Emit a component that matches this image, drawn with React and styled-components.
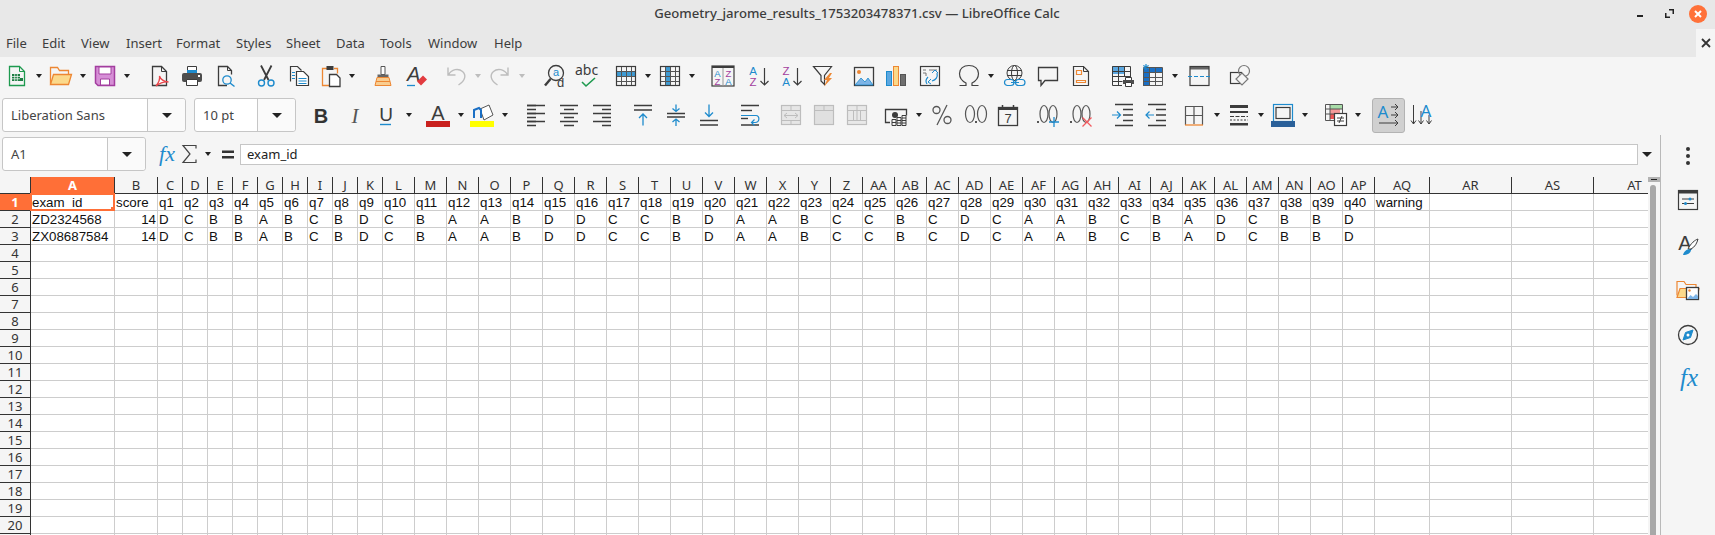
import styled, { createGlobalStyle } from 'styled-components';

const GlobalStyle = createGlobalStyle`
  html, body { margin: 0; padding: 0; background: #f5f5f5; overflow: hidden; }
  #root { width: 1715px; height: 535px; overflow: hidden; }
`;

const UI_FONT = '"Noto Sans", "Open Sans", sans-serif';
const DARK = '#3c3c3c';
const BLUE = '#1e8bcd';
const ORANGE = '#ed8733';
const PURPLE = '#a33e9f';
const GREEN = '#1e9a4f';
const RED = '#e8454a';
const GRAY = '#bdbdbd';

const Window = styled.div`
  width: 1715px;
  height: 535px;
  display: flex;
  flex-direction: column;
  background: #f5f5f5;
  color: #333;
  font-family: ${UI_FONT};
  overflow: hidden;
`;

const TitleBar = styled.div`
  height: 29px;
  flex: none;
  background: #e8e8e8;
  display: flex;
  align-items: center;
  justify-content: center;
  position: relative;
`;

const Title = styled.div`
  font-size: 13.15px;
  font-weight: 500;
  color: #3d3d3d;
  margin-top: -3px;
  margin-right: 1px;
`;

const WindowControls = styled.div`
  position: absolute;
  top: 0;
  right: 3px;
  height: 27px;
  display: flex;
  align-items: center;
`;

const CtrlButton = styled.div`
  width: 28px;
  height: 26px;
  display: flex;
  align-items: center;
  justify-content: center;
`;

const CloseCircle = styled.div`
  width: 18px;
  height: 18px;
  border-radius: 50%;
  background: #ff7139;
  display: flex;
  align-items: center;
  justify-content: center;
`;

const MenuBar = styled.div`
  height: 28px;
  flex: none;
  background: #e8e8e8;
  display: flex;
  align-items: center;
  padding-left: 6px;
  position: relative;
`;

const MenuItem = styled.div`
  width: ${({ $w }) => $w}px;
  flex: none;
  font-size: 13px;
  color: #3d3d3d;
  white-space: nowrap;
`;

const DocClose = styled.div`
  position: absolute;
  right: 0;
  top: 0;
  width: 19px;
  height: 28px;
  background: #f5f5f5;
  display: flex;
  align-items: center;
  justify-content: center;
`;

const ToolRow = styled.div`
  height: ${({ $h }) => $h}px;
  flex: none;
  display: flex;
  align-items: center;
  padding-left: ${({ $pl }) => $pl || 0}px;
`;

const Tool = styled.div`
  flex: none;
  width: ${({ $w }) => $w}px;
  height: ${({ $active }) => ($active ? '35px' : '24px')};
  margin-left: ${({ $ml }) => $ml}px;
  display: flex;
  align-items: center;
  justify-content: center;
  box-sizing: border-box;
  background: ${({ $active }) => ($active ? '#d0d0d0' : 'transparent')};
  border: ${({ $active }) => ($active ? '1px solid #b3b3b3' : 'none')};
  border-radius: 3px;
  svg { display: block; overflow: visible; flex: none; }
`;

const Caret = styled.span`
  display: block;
  width: 0;
  height: 0;
  border-left: ${({ $big }) => ($big ? 5 : 3.5)}px solid transparent;
  border-right: ${({ $big }) => ($big ? 5 : 3.5)}px solid transparent;
  border-top: ${({ $big }) => ($big ? 5 : 4)}px solid ${({ $gray }) => ($gray ? '#bdbdbd' : '#222')};
`;

const Combo = styled.div`
  width: ${({ $w }) => $w}px;
  height: 34px;
  margin-left: ${({ $ml }) => $ml || 0}px;
  flex: none;
  box-sizing: border-box;
  display: flex;
  background: #fff;
  border: 1px solid #c6c6c6;
  border-radius: 3px;
`;

const ComboText = styled.div`
  flex: 1;
  display: flex;
  align-items: center;
  padding-left: 8px;
  font-size: 13px;
  color: #444;
`;

const ComboArrow = styled.div`
  width: ${({ $w }) => $w}px;
  flex: none;
  display: flex;
  align-items: center;
  justify-content: center;
  background: #fafafa;
  border-left: 1px solid #c6c6c6;
  border-radius: 0 3px 3px 0;
`;

const Body = styled.div`
  flex: 1;
  min-height: 0;
  display: flex;
`;

const Workspace = styled.div`
  width: 1660px;
  flex: none;
  display: flex;
  flex-direction: column;
`;

const FormulaBar = styled.div`
  height: 38px;
  padding: 0 0 4px 2px;
  flex: none;
  display: flex;
  align-items: center;
`;

const FormulaInput = styled.div`
  width: 1398px;
  height: 21px;
  flex: none;
  box-sizing: border-box;
  background: #fff;
  border: 1px solid #c6c6c6;
  padding-left: 6px;
  font-size: 13px;
  line-height: 19px;
  color: #222;
`;

const SheetRow = styled.div`
  flex: 1;
  min-height: 0;
  display: flex;
`;

const SheetClip = styled.div`
  width: 1648px;
  flex: none;
  overflow: hidden;
  background: #fff;
`;

const SheetGrid = styled.div`
  display: grid;
  grid-template-columns: ${({ $cols }) => $cols};
  grid-auto-rows: 17px;
  width: max-content;
`;

const ColHead = styled.div`
  box-sizing: border-box;
  border-right: 1px solid #333;
  border-bottom: 1px solid #333;
  background: ${({ $on }) => ($on ? '#ff6f37' : '#f5f5f5')};
  color: ${({ $on }) => ($on ? '#fff' : '#333')};
  font-weight: ${({ $on }) => ($on ? 700 : 400)};
  font-size: 13px;
  line-height: 17px;
  text-align: center;
  overflow: hidden;
`;

const RowHead = styled.div`
  box-sizing: border-box;
  border-right: 1px solid #333;
  border-bottom: 1px solid #333;
  background: ${({ $on }) => ($on ? '#ff6f37' : '#f5f5f5')};
  color: ${({ $on }) => ($on ? '#fff' : '#333')};
  font-weight: ${({ $on }) => ($on ? 700 : 400)};
  font-size: 13px;
  line-height: 17px;
  text-align: center;
`;

const Cell = styled.div`
  position: relative;
  box-sizing: border-box;
  border-right: 1px solid #cdcdcd;
  border-bottom: 1px solid #cdcdcd;
  background: #fff;
  padding: 0 1px;
  font-family: "Liberation Sans", Arial, sans-serif;
  font-size: 13.33px;
  line-height: 17px;
  color: #111;
  white-space: nowrap;
  text-align: ${({ $right }) => ($right ? 'right' : 'left')};
`;

const CellCursor = styled.div`
  position: absolute;
  left: -1px;
  top: -1px;
  right: -1px;
  bottom: -1px;
  border: 2px solid #ff6f37;
  pointer-events: none;
  &::after {
    content: '';
    position: absolute;
    right: -3px;
    bottom: -3px;
    width: 5px;
    height: 5px;
    background: #ff6f37;
  }
`;

const ScrollTrack = styled.div`
  width: 12px;
  flex: none;
  display: flex;
  flex-direction: column;
  align-items: center;
  background: #f5f5f5;
`;

const ScrollCap = styled.div`
  width: 12px;
  height: 5px;
  flex: none;
  background: #b3b3b3;
  display: flex;
  align-items: center;
  justify-content: center;
  &::after {
    content: '';
    width: 6px;
    height: 1px;
    background: #222;
  }
`;

const ScrollThumb = styled.div`
  width: 6px;
  margin: 3px 3px 0 0;
  flex: 1;
  background: #a8a8a8;
  border-radius: 3px 3px 0 0;
`;

const Sidebar = styled.div`
  flex: 1;
  border-left: 1px solid #b9b9b9;
  display: flex;
  flex-direction: column;
  align-items: center;
  gap: 21px;
  padding-top: 11px;
`;

const SideIcon = styled.div`
  width: 24px;
  height: 24px;
  display: flex;
  align-items: center;
  justify-content: center;
  svg { display: block; overflow: visible; }
`;

const Dots = styled.div`
  height: 20px;
  margin-bottom: 1px;
  display: flex;
  flex-direction: column;
  align-items: center;
  justify-content: center;
  gap: 3px;
  span {
    width: 4px;
    height: 4px;
    border-radius: 50%;
    background: #333;
  }
`;

const T = ({ x, y, s = 12, c = DARK, w, i, f = 'Liberation Sans', a, children, ls }) => (
  <text x={x} y={y} fontSize={s} fill={c} stroke="none" fontWeight={w} fontStyle={i ? 'italic' : undefined}
    fontFamily={`"${f}", sans-serif`} textAnchor={a} letterSpacing={ls}>{children}</text>
);

const Lines = ({ ys, x1 = 3, x2 = 21, c = DARK, sw = 1.4 }) => (
  <path d={ys.map((y) => `M${x1} ${y}H${x2}`).join('')} stroke={c} strokeWidth={sw} />
);

const GridLines = ({ c = DARK }) => (
  <path d="M3 7.5h18M3 12.5h18M3 17.5h18M7.5 3v18M12.5 3v18M17.5 3v18" stroke={c} strokeWidth="1" />
);

const Zeros = ({ x, c = '#555' }) => (
  <>
    <rect x={x} y="18" width="2" height="2" fill={c} />
    <ellipse cx={x + 7} cy="11" rx="4" ry="8.500" stroke={c} strokeWidth="1.200" />
    <ellipse cx={x + 16} cy="11" rx="4" ry="8.500" stroke={c} strokeWidth="1.200" />
  </>
);

const icons = {
  calc: (
    <>
      <path d="M4.5 2.5h10l5 5v14h-15z" stroke={GREEN} strokeWidth="1.3" />
      <path d="M14.5 2.5v5h5" stroke={GREEN} />
      <path d="M7 10h8v7H7zM15 14h3v3h-3z" fill="#1c7c42" />
      <path d="M7 12.5h8M7 14.8h8M9.7 10v7M12.3 10v7" stroke="#fff" strokeWidth=".7" />
    </>
  ),
  open: (
    <>
      <path d="M1.5 20V3.5h7l2 3h9v4" stroke={ORANGE} strokeWidth="1.3" />
      <path d="M1.5 20.5l3-10h18l-3 10z" fill="#fbd98b" stroke={ORANGE} strokeWidth="1.3" />
    </>
  ),
  save: (
    <>
      <path d="M2.5 2.5h19v19H5l-2.5-2.5z" fill="#d68fd6" stroke={PURPLE} strokeWidth="1.5" />
      <path d="M6 3h12v7H6zM7.5 15h9v6h-9z" fill="#fff" stroke={PURPLE} />
    </>
  ),
  pdf: (
    <>
      <path d="M5.5 2.5h9l5 5v14h-14z" stroke={DARK} strokeWidth="1.3" />
      <path d="M14.5 2.5v5h5" stroke={DARK} />
      <path d="M9 22c2.500-3 4-7 3.500-10 1 3 4 5.500 9 6-4-.5-8 .5-12.500 4z" stroke={RED} strokeWidth="1.300" fill="#fff" />
    </>
  ),
  print: (
    <>
      <path d="M7.500 2.500h9v7h-9z" fill="#fff" stroke={DARK} />
      <rect x="7" y="6" width="10" height="3" fill={BLUE} />
      <rect x="2" y="9" width="20" height="9" rx="2" fill="#4d4d4d" />
      <path d="M6.500 15.500h11v6h-11z" fill="#fff" stroke={DARK} />
      <rect x="18" y="11" width="2" height="2" fill="#fff" />
    </>
  ),
  preview: (
    <>
      <path d="M13 21.500H4.500v-19h9l4 4v4" stroke={DARK} strokeWidth="1.300" />
      <path d="M13.500 2.500v4h4" stroke={DARK} />
      <circle cx="13" cy="16" r="4.200" stroke={BLUE} strokeWidth="1.300" />
      <path d="M16 19l4.500 3.500" stroke={BLUE} strokeWidth="1.500" />
    </>
  ),
  cut: (
    <>
      <path d="M10 16L17.500 1.500M14.500 16L7 1.500" stroke={DARK} strokeWidth="1.800" />
      <circle cx="7.500" cy="19" r="3" stroke={BLUE} strokeWidth="1.400" />
      <circle cx="17" cy="19" r="3" stroke={BLUE} strokeWidth="1.400" />
    </>
  ),
  copy: (
    <>
      <path d="M3.500 17.500v-15h7l4 4" stroke={DARK} strokeWidth="1.200" />
      <path d="M9.500 7.500h7l5 5v9h-12z" fill="#fff" stroke={DARK} strokeWidth="1.200" />
      <path d="M5 8.500h3M5 11.500h3M5 14.500h3M11.500 14.500h8M11.500 17h8M11.500 19.500h8" stroke={BLUE} />
    </>
  ),
  paste: (
    <>
      <path d="M8 4.500H3.500v17h8M15 4.500h3.500v5" stroke={ORANGE} strokeWidth="1.300" />
      <rect x="7.500" y="2" width="7" height="4" fill={DARK} />
      <path d="M10.500 10.500h7l3.500 3.500v8.500H10.500z" fill="#fff" stroke={DARK} strokeWidth="1.300" />
    </>
  ),
  clone: (
    <>
      <path d="M10 2.500h4v8h-4z" fill="#fff" stroke="#555" />
      <path d="M6.500 10.500h11v3h-11z" fill="#666" />
      <path d="M6 13.500h12l2 8H4z" fill="#f9cd90" stroke={ORANGE} />
      <path d="M5 17.500h14" stroke={ORANGE} />
    </>
  ),
  clear: (
    <>
      <T x="2" y="17" s={20} i>A</T>
      <path d="M2 21.500h8" stroke={BLUE} strokeWidth="1.300" />
      <path d="M12 17.500l6-6 4 4-6 6z" fill="#e23b3f" />
    </>
  ),
  undo: <path d="M4 3.500v7.500h7.500M4.500 11c3-6 10-7 14-3.500s3 9-4 13.500" stroke={GRAY} strokeWidth="1.400" />,
  redo: <path d="M20 3.500v7.500h-7.500M19.500 11c-3-6-10-7-14-3.500s-3 9 4 13.500" stroke={GRAY} strokeWidth="1.400" />,
  find: (
    <>
      <circle cx="13" cy="9" r="7.500" stroke={DARK} strokeWidth="1.300" />
      <T x="13" y="12" s={11} c={BLUE} a="middle">a</T>
      <path d="M2 21.500l5.500-6.500" stroke={DARK} strokeWidth="2.400" />
      <T x="14" y="23" s={13}>d</T>
    </>
  ),
  spell: (
    <>
      <T x="0" y="11" s={14} f="Noto Sans">abc</T>
      <path d="M7 18l4 4 9-8" stroke={GREEN} strokeWidth="1.600" />
    </>
  ),
  gridRows: (
    <>
      <rect x="2.500" y="7.500" width="19" height="5" fill={BLUE} opacity=".85" />
      <rect x="2.500" y="2.500" width="19" height="19" stroke={DARK} strokeWidth="1.200" />
      <GridLines c="#555" />
    </>
  ),
  gridCols: (
    <>
      <rect x="7.500" y="2.500" width="5" height="19" fill={BLUE} opacity=".85" />
      <rect x="2.500" y="2.500" width="19" height="19" stroke={DARK} strokeWidth="1.200" />
      <GridLines c="#555" />
    </>
  ),
  sort: (
    <>
      <rect x="1" y="2" width="22" height="20" stroke={DARK} strokeWidth="1.200" />
      <rect x="1" y="2" width="22" height="2" fill={DARK} />
      <path d="M12 4v18" stroke="#999" />
      <T x="6.500" y="12.500" s={9.500} c={BLUE} a="middle">A</T>
      <T x="6.500" y="21" s={9.500} c={PURPLE} a="middle">Z</T>
      <T x="17.500" y="12.500" s={9.500} c={PURPLE} a="middle">Z</T>
      <T x="17.500" y="21" s={9.500} c={BLUE} a="middle">A</T>
    </>
  ),
  asc: (
    <>
      <T x="7" y="11" s={11.500} c={BLUE} a="middle">A</T>
      <T x="7" y="22" s={11.500} c={PURPLE} a="middle">Z</T>
      <path d="M18.500 4v17M14.500 17l4 4 4-4" stroke={DARK} strokeWidth="1.200" />
    </>
  ),
  desc: (
    <>
      <T x="7" y="11" s={11.500} c={PURPLE} a="middle">Z</T>
      <T x="7" y="22" s={11.500} c={BLUE} a="middle">A</T>
      <path d="M18.500 4v17M14.500 17l4 4 4-4" stroke={DARK} strokeWidth="1.200" />
    </>
  ),
  filter: (
    <>
      <path d="M1.500 2.500h18l-7 9v9l-3.500-3.500V11.500z" stroke={DARK} strokeWidth="1.200" />
      <path d="M18 9l-6 7h3l-3 6.500 8-8.500h-3l3-5z" fill={ORANGE} />
    </>
  ),
  image: (
    <>
      <rect x="2.500" y="3.500" width="19" height="18" stroke={DARK} strokeWidth="1.300" />
      <circle cx="7" cy="8" r="2" fill={ORANGE} />
      <path d="M3 21l6-7 4 4 3-4 5 7z" fill="#7db4e6" stroke={BLUE} strokeWidth=".8" />
    </>
  ),
  chart: (
    <>
      <rect x="2.500" y="7.500" width="5" height="14" fill="#5ba7e0" stroke={BLUE} />
      <rect x="9.500" y="2.500" width="5" height="19" fill="#fbd98b" stroke={ORANGE} />
      <rect x="16.500" y="10.500" width="5" height="11" fill="#6f6f6f" stroke="#555" />
    </>
  ),
  pivot: (
    <>
      <rect x="2.500" y="2.500" width="19" height="19" stroke={DARK} strokeWidth="1.200" />
      <path d="M5 6h3M5 9h3v3M11 6h8" stroke="#777" />
      <path d="M9 20c-2-3-1-5 1-7M19 9c1 4-1 7-5 8" stroke={BLUE} strokeWidth="1.200" />
      <path d="M14 9l3-3 3 3M13 20l-3-2 3-3" stroke={BLUE} />
    </>
  ),
  omega: <path d="M2.500 21.500h6.500v-2.500c-4-2-6.500-5-6.500-9.500 0-5 4-8 9.500-8s9.500 3 9.500 8c0 4.500-2.500 7.500-6.500 9.500v2.500h6.500" stroke="#444" strokeWidth="1.200" />,
  link: (
    <>
      <circle cx="11.500" cy="9" r="7.500" stroke={DARK} />
      <ellipse cx="11.500" cy="9" rx="3" ry="7.500" stroke={DARK} />
      <path d="M4 6.500h15M4 11.500h15" stroke={DARK} />
      <rect x="1.500" y="15.500" width="9.500" height="6" rx="3" fill="#f5f5f5" stroke={BLUE} strokeWidth="1.200" />
      <rect x="12.500" y="15.500" width="9.500" height="6" rx="3" fill="#f5f5f5" stroke={BLUE} strokeWidth="1.200" />
      <path d="M8 18.500h8" stroke={BLUE} />
    </>
  ),
  comment: <path d="M2.500 3.500h19v13H9l-4 5v-5H2.500z" stroke={DARK} strokeWidth="1.300" />,
  headers: (
    <>
      <path d="M4.500 2.500h10l5 5v14h-15z" stroke={DARK} strokeWidth="1.200" />
      <path d="M14.500 2.500v5h5" stroke={DARK} />
      <path d="M7.500 6.500h5v4h-5zM7.500 16.500h9v2h-9z" stroke={ORANGE} strokeWidth="1.200" />
    </>
  ),
  printArea: (
    <>
      <rect x="2" y="2" width="12" height="8" fill="#5ba7e0" />
      <path d="M2.500 2.500h18v11M12 21.500H2.500v-19M2.500 7.500h18M2.500 12.500h18M2.500 17.500h10M8.500 2.500v19M14.500 2.500v10" stroke={DARK} />
      <path d="M15.500 13.500h6v3h-6z" fill="#fff" stroke={DARK} />
      <rect x="13" y="16" width="11" height="4" fill="#4d4d4d" />
      <path d="M15.500 18.500h6v4h-6z" fill="#fff" stroke={DARK} />
    </>
  ),
  freeze: (
    <>
      <rect x="2" y="4" width="20" height="4" fill="#1b6fc4" />
      <rect x="2" y="4" width="6" height="18" fill="#1b6fc4" />
      <path d="M2.500 3.500h19v18h-19zM2.500 8.500h19M2.500 13.500h19M2.500 17.500h19M8.500 3.500v18M14.500 3.500v18" stroke="#555" />
      <path d="M5 0v6M2.300 1.500l5.400 3M7.700 1.500l-5.400 3" stroke={BLUE} strokeWidth="1.200" />
    </>
  ),
  headerLine: (
    <>
      <rect x="3" y="2" width="19" height="3.500" fill="#666" />
      <rect x="3" y="2.500" width="19" height="19" stroke={DARK} strokeWidth="1.200" />
      <path d="M1 12.500h23" stroke={BLUE} strokeWidth="1.200" strokeDasharray="4 2" />
    </>
  ),
  shapes: (
    <>
      <rect x="2.500" y="8.500" width="11" height="11" stroke={DARK} strokeWidth="1.200" />
      <circle cx="16" cy="7" r="5.500" stroke="#777" strokeWidth="1.200" />
      <path d="M14 9l6 6-6 6-6-6z" fill="#f5f5f5" stroke="#777" strokeWidth="1.200" />
    </>
  ),
  bold: <T x="12" y="19.500" s={20} w="700" a="middle" c="#333">B</T>,
  italic: <T x="12" y="20" s={21} i a="middle" f="Liberation Serif" c="#555">I</T>,
  underline: (
    <>
      <T x="12" y="18" s={19} a="middle">U</T>
      <path d="M6 21.500h11" stroke={BLUE} strokeWidth="1.400" />
    </>
  ),
  fontColor: (
    <>
      <T x="12" y="16.500" s={20} a="middle">A</T>
      <rect x="0" y="18" width="24" height="6" fill="#c9211e" />
    </>
  ),
  bgColor: (
    <>
      <path d="M10 6l9-4 4 10-9 5z" fill="#fff" stroke="#555" />
      <path d="M4 15V7l5-2 2 2v8" stroke="#1b6fc4" strokeWidth="2" />
      <rect x="0" y="18" width="24" height="6" fill="#ffff00" />
    </>
  ),
  alignLeft: <><Lines ys={[2.500, 6.500, 10.500, 14.500, 18.500, 22.500]} x2={12} /><Lines ys={[2.500, 10.500, 18.500]} /></>,
  alignCenter: <><Lines ys={[6.500, 14.500, 22.500]} x1={7} x2={17} /><Lines ys={[2.500, 10.500, 18.500]} /></>,
  alignRight: <><Lines ys={[6.500, 14.500, 22.500]} x1={12} /><Lines ys={[2.500, 10.500, 18.500]} /></>,
  top: (
    <>
      <Lines ys={[2.500, 7]} />
      <path d="M12 22.500V11M8 15l4-4 4 4" stroke={BLUE} strokeWidth="1.300" />
    </>
  ),
  middle: (
    <>
      <Lines ys={[10.500, 14]} />
      <path d="M12 1.500v7M8.500 5.500l3.500 3 3.500-3M12 23v-7M8.500 19l3.500-3 3.500 3" stroke={BLUE} strokeWidth="1.300" />
    </>
  ),
  bottom: (
    <>
      <Lines ys={[17.500, 22]} />
      <path d="M12 1.500V13M8 9.500l4 4 4-4" stroke={BLUE} strokeWidth="1.300" />
    </>
  ),
  wrap: (
    <>
      <Lines ys={[2.500, 22]} />
      <Lines ys={[7.500]} x2={14} />
      <Lines ys={[15.500]} x2={10} />
      <path d="M3 12.500h15c4 0 4 7-1 7h-3M16.500 16.500l-3 3 3 3" stroke={BLUE} strokeWidth="1.200" />
    </>
  ),
  merge: (
    <>
      <rect x="2.500" y="2.500" width="19" height="19" fill="#e6e6e6" stroke={GRAY} strokeWidth="1.200" />
      <path d="M2.500 7.500h19M2.500 17.500h19M12 2.500v5M12 17.500v4" stroke={GRAY} />
      <path d="M5 12.500h14M8 10l-3 2.500 3 2.500M16 10l3 2.500-3 2.500" stroke={GRAY} />
    </>
  ),
  merge2: (
    <>
      <rect x="2.500" y="2.500" width="19" height="19" fill="#e0e0e0" stroke={GRAY} strokeWidth="1.200" />
      <path d="M2.500 7.500h19M12 2.500v5" stroke={GRAY} />
    </>
  ),
  merge3: (
    <>
      <rect x="2.500" y="2.500" width="19" height="19" fill="#e8e8e8" stroke={GRAY} strokeWidth="1.200" />
      <path d="M2.500 7.500h19M2.500 17.500h19M8.500 7.500v10M12 2.500v5M15.500 7.500v10M12 7.500v10" stroke={GRAY} />
    </>
  ),
  currency: (
    <>
      <path d="M6 19.500H1.500v-13h21v6" stroke={DARK} strokeWidth="1.300" />
      <circle cx="11" cy="12" r="3" fill={DARK} />
      <path d="M8 16.500h4v6H8zM13 14.500h4v8h-4zM18 12.500h4v10h-4z" fill="#f5f5f5" stroke={DARK} />
      <path d="M13 17.500h4M13 20h4M18 15h4M18 17.500h4M18 20h4M8 19.500h4" stroke={DARK} />
    </>
  ),
  percent: (
    <>
      <circle cx="6.500" cy="7" r="3.500" stroke="#555" strokeWidth="1.300" />
      <circle cx="17.500" cy="17" r="3.500" stroke="#555" strokeWidth="1.300" />
      <path d="M17 2L7 22" stroke="#555" strokeWidth="1.300" />
    </>
  ),
  number: (
    <>
      <ellipse cx="6" cy="11" rx="4.500" ry="8.500" stroke="#555" strokeWidth="1.200" />
      <rect x="11" y="18" width="2" height="2" fill="#555" />
      <ellipse cx="18" cy="11" rx="4.500" ry="8.500" stroke="#555" strokeWidth="1.200" />
    </>
  ),
  date: (
    <>
      <rect x="2.500" y="4.500" width="19" height="18" stroke={DARK} strokeWidth="1.300" />
      <rect x="2.500" y="4" width="19" height="3" fill={DARK} />
      <path d="M6.500 2v3M17.500 2v3" stroke={DARK} strokeWidth="1.500" />
      <T x="12" y="20" s={13} a="middle">7</T>
    </>
  ),
  addDec: (
    <>
      <Zeros x={0} />
      <path d="M17 14v10M12 19h10" stroke={BLUE} strokeWidth="1.300" />
    </>
  ),
  delDec: (
    <>
      <Zeros x={0} />
      <path d="M12.500 14.500l9 9M21.500 14.500l-9 9" stroke="#f25a5f" strokeWidth="1.300" />
    </>
  ),
  indentAdd: (
    <>
      <Lines ys={[1.500, 22.500]} x1={4} x2={22} />
      <Lines ys={[6.500, 12, 17.500]} x1={12} x2={22} />
      <path d="M1 12h8M6 8.500l3.500 3.500L6 15.500" stroke={BLUE} strokeWidth="1.200" />
    </>
  ),
  indentDel: (
    <>
      <Lines ys={[1.500, 22.500]} x1={4} x2={22} />
      <Lines ys={[6.500, 12, 17.500]} x1={12} x2={22} />
      <path d="M10 12H2M5.500 8.500L2 12l3.500 3.500" stroke={BLUE} strokeWidth="1.200" />
    </>
  ),
  borders: (
    <>
      <path d="M3.500 22V3.500h17V22M12 3.500V21M3.500 12.500h17" stroke="#555" strokeWidth="1.200" />
      <path d="M3 22h18" stroke={ORANGE} strokeWidth="1.300" />
    </>
  ),
  borderStyle: (
    <>
      <rect x="3" y="2" width="18" height="3" fill={DARK} />
      <rect x="3" y="8" width="18" height="2" fill={DARK} />
      <path d="M3 13.500h18" stroke={DARK} strokeDasharray="4 1.500" />
      <path d="M3 17h18" stroke={DARK} strokeDasharray="2 1.500" />
      <rect x="3" y="20" width="18" height="2.500" fill={DARK} />
    </>
  ),
  borderColor: (
    <>
      <rect x="2.500" y="1.500" width="19" height="17" stroke={BLUE} strokeWidth="1.200" />
      <rect x="5" y="4.500" width="14" height="11" stroke={DARK} strokeWidth="1.200" />
      <rect x="0" y="18" width="24" height="6" fill="#2a6099" />
    </>
  ),
  cond: (
    <>
      <rect x="6" y="1" width="12" height="5" fill="#a8dca8" />
      <rect x="6" y="6" width="10" height="5" fill="#f59a9a" />
      <rect x="6" y="11" width="6" height="5" fill="#ee5555" />
      <path d="M1.500 1.500h17v9M11 17.500H1.500v-16M1.500 6h17M1.500 11h9M6 1.500v16" stroke="#555" />
      <rect x="10.500" y="10.500" width="12" height="12" fill="#fff" stroke={DARK} strokeWidth="1.200" />
      <path d="M13 15h7M13 18h7M18 13l-3 7" stroke={DARK} />
    </>
  ),
  textHoriz: (
    <>
      <T x="6" y="15" s={17} c={BLUE} a="middle" f="Noto Sans">A</T>
      <path d="M14 4h7M18 1l3 3-3 3M14 12h7M18 9l3 3-3 3M2 20h19M18 17l3 3-3 3" stroke={DARK} strokeWidth="1" />
    </>
  ),
  textVert: (
    <>
      <path d="M3.500 2v19M1 17.500l2.500 3.500L6 17.500M11 8v13M8.500 17.500L11 21l2.500-3.500M19 12v9M16.500 17.500L19 21l2.500-3.500" stroke={DARK} strokeWidth="1" />
      <T x="16" y="14" s={17} c={BLUE} a="middle" f="Noto Sans">A</T>
    </>
  ),
  fxBar: <T x="12" y="19" s={22} i c={BLUE} a="middle" f="Liberation Serif">fx</T>,
  sigma: <path d="M18 6.500v-3H5l7 8.500-7 8.500h13v-3" stroke="#444" strokeWidth="1.200" />,
  equal: <path d="M6 8.500h12v2.500H6zM6 14h12v2.500H6z" fill="#333" />,
};

const sideIcons = [
  <>
    <rect x="2.500" y="2.500" width="19" height="19" stroke={DARK} strokeWidth="1.200" />
    <rect x="2.500" y="2.500" width="19" height="3" fill={DARK} />
    <path d="M6 11h12M6 15.500h12" stroke={DARK} />
    <circle cx="14" cy="11" r="1.500" fill={BLUE} />
    <circle cx="9.500" cy="15.500" r="1.500" fill={BLUE} />
  </>,
  <>
    <T x="9" y="17" s={20} a="middle">A</T>
    <path d="M12 16c3-6 7-9 10-10-1 4-3 8-7 10z" fill="#fff" stroke={DARK} />
    <path d="M7 22c1-4 5-7 8-5 0 3-4 5-8 5z" fill={BLUE} />
  </>,
  <>
    <path d="M1 17.500v-14h7l2 3h10v3" stroke={ORANGE} strokeWidth="1.200" />
    <path d="M1 19.500l3-9h19l-2 9z" fill="#fbd98b" stroke={ORANGE} strokeWidth="1.200" />
    <rect x="10.500" y="9.500" width="12" height="12" fill="#fff" stroke={DARK} strokeWidth="1.300" />
    <circle cx="13.500" cy="12.500" r="1.200" fill={ORANGE} />
    <path d="M11 21l3.500-4 2.500 2 3-3 2 2v3z" fill="#7db4e6" />
  </>,
  <>
    <circle cx="12" cy="12" r="9.500" stroke={DARK} strokeWidth="1.300" />
    <path d="M17 7l-2.500 7.500L7 17l2.500-7.500z" fill={BLUE} stroke={BLUE} />
    <circle cx="12" cy="12" r="1.500" fill="#fff" />
  </>,
  <T x="13" y="18" s={25} i c={BLUE} a="middle" f="Liberation Serif">fx</T>,
];

const Icon = ({ name }) => (
  <svg width="24" height="24" viewBox="0 0 24 24" fill="none">{icons[name]}</svg>
);

// [icon, centre x]; a name of "caret" draws the small drop-down triangle
const ROW_ONE = [
  ['calc', 17], ['caret', 39], ['open', 61], ['caret', 83], ['save', 105], ['caret', 127],
  ['pdf', 159], ['print', 192], ['preview', 226], ['cut', 266], ['copy', 299], ['paste', 331],
  ['caret', 352], ['clone', 383], ['clear', 417], ['undo', 456], ['grayCaret', 478], ['redo', 500],
  ['grayCaret', 522], ['find', 555], ['spell', 587], ['gridRows', 626], ['caret', 648],
  ['gridCols', 670], ['caret', 692], ['sort', 723], ['asc', 758], ['desc', 791], ['filter', 824],
  ['image', 864], ['chart', 896], ['pivot', 930], ['omega', 969], ['caret', 991], ['link', 1015],
  ['comment', 1048], ['headers', 1081], ['printArea', 1122], ['freeze', 1153], ['caret', 1175],
  ['headerLine', 1199], ['shapes', 1240],
];

const ROW_TWO = [
  ['bold', 321], ['italic', 355], ['underline', 386], ['caret', 409], ['fontColor', 438],
  ['caret', 461], ['bgColor', 482], ['caret', 505], ['alignLeft', 536], ['alignCenter', 569],
  ['alignRight', 602], ['top', 643], ['middle', 676], ['bottom', 709], ['wrap', 750], ['merge', 791],
  ['merge2', 824], ['merge3', 857], ['currency', 896], ['caret', 919], ['percent', 942],
  ['number', 976], ['date', 1008], ['addDec', 1049], ['delDec', 1082], ['indentAdd', 1123],
  ['indentDel', 1156], ['borders', 1194], ['caret', 1217], ['borderStyle', 1239], ['caret', 1261],
  ['borderColor', 1283], ['caret', 1305], ['cond', 1336], ['caret', 1358], ['textHoriz', 1388.5, 33],
  ['textVert', 1422],
];

const toolWidth = (name, w) => w || (name.toLowerCase().includes('caret') ? 10 : 24);

function ToolStrip({ items, startX }) {
  let end = startX;
  return items.map(([name, center, w], i) => {
    const width = toolWidth(name, w);
    const ml = center - width / 2 - end;
    end = center + width / 2;
    return (
      <Tool key={i} $w={width} $ml={ml} $active={Boolean(w)}>
        {name === 'caret' && <Caret />}
        {name === 'grayCaret' && <Caret $gray />}
        {!name.toLowerCase().includes('caret') && <Icon name={name} />}
      </Tool>
    );
  });
}

const MENUS = [
  ['File', 36], ['Edit', 39], ['View', 45], ['Insert', 50], ['Format', 60], ['Styles', 50],
  ['Sheet', 50], ['Data', 44], ['Tools', 48], ['Window', 66], ['Help', 40],
];

const colName = (i) => (i < 26 ? String.fromCharCode(65 + i) : 'A' + String.fromCharCode(39 + i));

const COL_WIDTHS = Array.from({ length: 46 }, (_, i) => {
  if (i === 0) return 84;
  if (i === 1) return 43;
  if (i < 11) return 25;
  if (i < 42) return 32;
  return i === 42 ? 55 : 82;
});

const ANSWERS = 'DCBBABCBDCBAABDDCCBDAABCCBCDCAABCBADCBBD'.split('');
const HEAD_ROW = ['exam_id', 'score', ...ANSWERS.map((_, i) => `q${i + 1}`), 'warning'];
const DATA_ROWS = [
  ['ZD2324568', '14', ...ANSWERS],
  ['ZX08687584', '14', ...ANSWERS],
];

function rowValues(r) {
  if (r === 0) return HEAD_ROW;
  return DATA_ROWS[r - 1] || [];
}

export default function App() {
  return (
    <Window>
      <GlobalStyle />
      <TitleBar>
        <Title>Geometry_jarome_results_1753203478371.csv — LibreOffice Calc</Title>
        <WindowControls>
          <CtrlButton>
            <svg width="10" height="10" viewBox="0 0 10 10"><rect x="0" y="6" width="6" height="2" fill="#222" /></svg>
          </CtrlButton>
          <CtrlButton>
            <svg width="10" height="10" viewBox="0 0 10 10" fill="#222"><path d="M4 0h5v5H7.500V1.500H4zM0 4h1.500v3.500H5V9H0z" /></svg>
          </CtrlButton>
          <CtrlButton>
            <CloseCircle>
              <svg width="10" height="10" viewBox="0 0 10 10"><path d="M2 2l6 6M8 2l-6 6" stroke="#fff" strokeWidth="2" /></svg>
            </CloseCircle>
          </CtrlButton>
        </WindowControls>
      </TitleBar>
      <MenuBar>
        {MENUS.map(([label, w]) => <MenuItem key={label} $w={w}>{label}</MenuItem>)}
        <DocClose>
          <svg width="10" height="10" viewBox="0 0 10 10"><path d="M1 1l8 8M9 1l-8 8" stroke="#333" strokeWidth="1.800" /></svg>
        </DocClose>
      </MenuBar>
      <ToolRow $h={38}>
        <ToolStrip items={ROW_ONE} startX={0} />
      </ToolRow>
      <ToolRow $h={40} $pl={2}>
        <Combo $w={184}>
          <ComboText>Liberation Sans</ComboText>
          <ComboArrow $w={37}><Caret $big /></ComboArrow>
        </Combo>
        <Combo $w={102} $ml={8}>
          <ComboText>10 pt</ComboText>
          <ComboArrow $w={37}><Caret $big /></ComboArrow>
        </Combo>
        <ToolStrip items={ROW_TWO} startX={296} />
      </ToolRow>
      <Body>
        <Workspace>
          <FormulaBar>
            <Combo $w={144}>
              <ComboText>A1</ComboText>
              <ComboArrow $w={37}><Caret $big /></ComboArrow>
            </Combo>
            <ToolStrip
              startX={146}
              items={[['fxBar', 167], ['sigma', 190], ['caret', 208], ['equal', 228]]}
            />
            <FormulaInput>exam_id</FormulaInput>
            <Tool $w={18} $ml={0}><Caret $big /></Tool>
          </FormulaBar>
          <SheetRow>
            <SheetClip>
              <SheetGrid $cols={`31px ${COL_WIDTHS.map((w) => `${w}px`).join(' ')}`}>
                <ColHead />
                {COL_WIDTHS.map((_, i) => <ColHead key={i} $on={i === 0}>{colName(i)}</ColHead>)}
                {Array.from({ length: 21 }, (_, r) => [
                  <RowHead key={`h${r}`} $on={r === 0}>{r < 20 ? r + 1 : ''}</RowHead>,
                  ...COL_WIDTHS.map((_, c) => (
                    <Cell key={`${r}-${c}`} $right={r > 0 && c === 1}>
                      {rowValues(r)[c]}
                      {r === 0 && c === 0 && <CellCursor />}
                    </Cell>
                  )),
                ])}
              </SheetGrid>
            </SheetClip>
            <ScrollTrack>
              <ScrollCap />
              <ScrollThumb />
            </ScrollTrack>
          </SheetRow>
        </Workspace>
        <Sidebar>
          <Dots><span /><span /><span /></Dots>
          {sideIcons.map((icon, i) => (
            <SideIcon key={i}>
              <svg width="24" height="24" viewBox="0 0 24 24" fill="none">{icon}</svg>
            </SideIcon>
          ))}
        </Sidebar>
      </Body>
    </Window>
  );
}
